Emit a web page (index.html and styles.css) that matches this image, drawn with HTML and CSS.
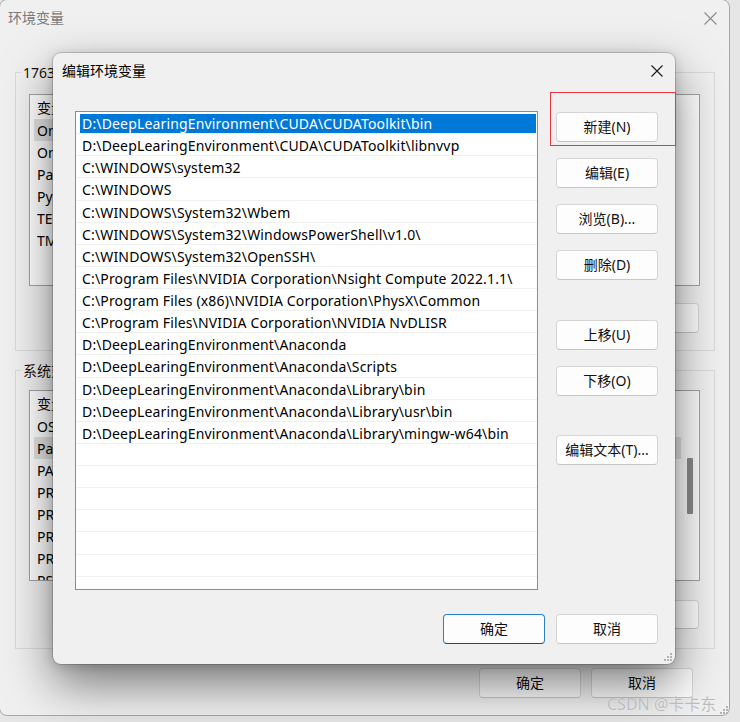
FILE: index.html
```html
<!DOCTYPE html>
<html lang="zh-CN">
<head>
<meta charset="utf-8">
<title>编辑环境变量</title>
<link rel="stylesheet" href="styles.css">
</head>
<body>
<div class="desk">
  <div class="win">
    <div class="win-title">
      <span class="win-title-text">环境变量</span>
      <svg class="win-close" width="13" height="13" viewBox="0 0 13 13"><path d="M0.5 0.5L12.5 12.5M12.5 0.5L0.5 12.5" stroke="#8a8a8a" stroke-width="1.1" fill="none"/></svg>
    </div>

    <fieldset class="grp grp-user">
      <legend>17631 的用户变量(U)</legend>
      <div class="lv lv-user">
        <div class="lv-head"><span class="c1">变量</span><span class="c2">值</span></div>
        <div class="lv-row gray-name"><span class="c1">OneDrive</span><span class="c2">C:\Users\17631\OneDrive</span></div>
        <div class="lv-row"><span class="c1">OneDriveConsumer</span><span class="c2">C:\Users\17631\OneDrive</span></div>
        <div class="lv-row"><span class="c1">Path</span><span class="c2">C:\Users\17631\AppData\Local\Microsoft\WindowsApps;</span></div>
        <div class="lv-row"><span class="c1">PyCharm</span><span class="c2">D:\PyCharm\bin;</span></div>
        <div class="lv-row"><span class="c1">TEMP</span><span class="c2">C:\Users\17631\AppData\Local\Temp</span></div>
        <div class="lv-row"><span class="c1">TMP</span><span class="c2">C:\Users\17631\AppData\Local\Temp</span></div>
      </div>
      <div class="grp-btns">
        <button class="btn">新建(N)...</button>
        <button class="btn">编辑(E)...</button>
        <button class="btn">删除(D)</button>
      </div>
    </fieldset>

    <fieldset class="grp grp-sys">
      <legend>系统变量(S)</legend>
      <div class="lv lv-sys">
        <div class="lv-main">
          <div class="lv-head"><span class="c1">变量</span><span class="c2">值</span></div>
          <div class="lv-row"><span class="c1">OS</span><span class="c2">Windows_NT</span></div>
          <div class="lv-row gray"><span class="c1">Path</span><span class="c2">D:\DeepLearingEnvironment\CUDA\CUDAToolkit\bin;</span></div>
          <div class="lv-row"><span class="c1">PATHEXT</span><span class="c2">.COM;.EXE;.BAT;.CMD;.VBS;.VBE;.JS;</span></div>
          <div class="lv-row"><span class="c1">PROCESSOR_ARCHITECTURE</span><span class="c2">AMD64</span></div>
          <div class="lv-row"><span class="c1">PROCESSOR_IDENTIFIER</span><span class="c2">Intel64 Family 6</span></div>
          <div class="lv-row"><span class="c1">PROCESSOR_LEVEL</span><span class="c2">6</span></div>
          <div class="lv-row"><span class="c1">PROCESSOR_REVISION</span><span class="c2">a502</span></div>
          <div class="lv-row"><span class="c1">PSModulePath</span><span class="c2">%ProgramFiles%\WindowsPowerShell\Modules</span></div>
        </div>
        <div class="lv-scroll"><div class="lv-thumb"></div></div>
      </div>
      <div class="grp-btns grp-btns-sys">
        <button class="btn">新建(W)...</button>
        <button class="btn">编辑(I)...</button>
        <button class="btn">删除(L)</button>
      </div>
    </fieldset>

    <div class="win-foot">
      <button class="btn">确定</button>
      <button class="btn">取消</button>
    </div>
    <svg class="grip grip-win" width="9" height="9" viewBox="0 0 9 9"><g fill="#b4b4b4"><rect x="7" y="1" width="2" height="2"/><rect x="4" y="4" width="2" height="2"/><rect x="7" y="4" width="2" height="2"/><rect x="1" y="7" width="2" height="2"/><rect x="4" y="7" width="2" height="2"/><rect x="7" y="7" width="2" height="2"/></g></svg>
  </div>

  <div class="dlg">
    <div class="dlg-title">
      <span class="dlg-title-text">编辑环境变量</span>
      <svg class="dlg-close" width="12" height="12" viewBox="0 0 12 12"><path d="M0.5 0.5L11.5 11.5M11.5 0.5L0.5 11.5" stroke="#1a1a1a" stroke-width="1.1" fill="none"/></svg>
    </div>
    <div class="dlg-body">
      <div class="plist">
        <div class="prow sel"><span class="pcell">D:\DeepLearingEnvironment\CUDA\CUDAToolkit\bin</span></div>
        <div class="prow"><span class="pcell">D:\DeepLearingEnvironment\CUDA\CUDAToolkit\libnvvp</span></div>
        <div class="prow"><span class="pcell">C:\WINDOWS\system32</span></div>
        <div class="prow"><span class="pcell">C:\WINDOWS</span></div>
        <div class="prow"><span class="pcell">C:\WINDOWS\System32\Wbem</span></div>
        <div class="prow"><span class="pcell">C:\WINDOWS\System32\WindowsPowerShell\v1.0\</span></div>
        <div class="prow"><span class="pcell">C:\WINDOWS\System32\OpenSSH\</span></div>
        <div class="prow"><span class="pcell">C:\Program Files\NVIDIA Corporation\Nsight Compute 2022.1.1\</span></div>
        <div class="prow"><span class="pcell">C:\Program Files (x86)\NVIDIA Corporation\PhysX\Common</span></div>
        <div class="prow"><span class="pcell">C:\Program Files\NVIDIA Corporation\NVIDIA NvDLISR</span></div>
        <div class="prow"><span class="pcell">D:\DeepLearingEnvironment\Anaconda</span></div>
        <div class="prow"><span class="pcell">D:\DeepLearingEnvironment\Anaconda\Scripts</span></div>
        <div class="prow"><span class="pcell">D:\DeepLearingEnvironment\Anaconda\Library\bin</span></div>
        <div class="prow"><span class="pcell">D:\DeepLearingEnvironment\Anaconda\Library\usr\bin</span></div>
        <div class="prow"><span class="pcell">D:\DeepLearingEnvironment\Anaconda\Library\mingw-w64\bin</span></div>
        <div class="prow"><span class="pcell"></span></div>
        <div class="prow"><span class="pcell"></span></div>
        <div class="prow"><span class="pcell"></span></div>
        <div class="prow"><span class="pcell"></span></div>
        <div class="prow"><span class="pcell"></span></div>
        <div class="prow"><span class="pcell"></span></div>
        <div class="prow"><span class="pcell"></span></div>
      </div>
      <div class="side">
        <button class="btn">新建(N)</button>
        <button class="btn">编辑(E)</button>
        <button class="btn">浏览(B)...</button>
        <button class="btn">删除(D)</button>
        <button class="btn gap-big">上移(U)</button>
        <button class="btn">下移(O)</button>
        <button class="btn gap-big2">编辑文本(T)...</button>
      </div>
    </div>
    <div class="dlg-foot">
      <button class="btn btn-default">确定</button>
      <button class="btn">取消</button>
    </div>
    <svg class="grip grip-dlg" width="9" height="9" viewBox="0 0 9 9"><g fill="#b4b4b4"><rect x="7" y="1" width="2" height="2"/><rect x="4" y="4" width="2" height="2"/><rect x="7" y="4" width="2" height="2"/><rect x="1" y="7" width="2" height="2"/><rect x="4" y="7" width="2" height="2"/><rect x="7" y="7" width="2" height="2"/></g></svg>
  </div>

  <div class="mark"></div>
  <div class="wm">CSDN @卡卡东</div>
</div>
</body>
</html>
```

FILE: styles.css
```css
* { box-sizing: border-box; }
html, body { margin: 0; padding: 0; }
body {
  width: 740px;
  height: 722px;
  overflow: hidden;
  background: #e6e6e6;
  font-family: "Noto Sans", "Noto Sans CJK SC", sans-serif;
  font-size: 14px;
  color: #000;
}
.desk { position: relative; width: 740px; height: 722px; overflow: hidden; }

/* ---------- buttons ---------- */
.btn {
  width: 102px;
  height: 30px;
  padding: 0;
  background: #fdfdfd;
  border: 1px solid #d6d6d6;
  border-bottom-color: #c6c6c6;
  border-radius: 4px;
  font-family: "Noto Sans", "Noto Sans CJK SC", sans-serif;
  font-size: 14px;
  color: #111;
  line-height: 28px;
  text-align: center;
  white-space: nowrap;
}
.btn-default {
  border: 1px solid #2a7fc9;
  border-bottom-color: #0b4f8f;
}

/* ---------- background window ---------- */
.win {
  position: absolute;
  left: -1px;
  top: -1px;
  width: 731px;
  height: 717px;
  background: #f0f0f0;
  border: 1px solid #a8a8a8;
  border-radius: 8px;
  display: flex;
  flex-direction: column;
}
.win-title {
  height: 36px;
  flex: none;
  display: flex;
  align-items: center;
  justify-content: space-between;
  padding: 0 12px 0 8px;
}
.win-title-text { color: #7a7a7a; line-height: 20px; }
.win-close { display: block; }

.grp {
  margin: 26.5px 0 0 15px;
  width: 700px;
  min-width: 0;
  border: 1px solid #dadada;
  padding: 12.5px 14px 17px 13px;
  display: flex;
  flex-direction: column;
  gap: 17px;
}
.grp legend {
  margin-left: -8px;
  padding: 0 2px;
  line-height: 19px;
  color: #111;
}
.grp-sys {
  margin-top: 9.5px;
  padding: 10.5px 14px 19px 13px;
  gap: 19px;
}
.grp-btns {
  display: flex;
  justify-content: flex-end;
  gap: 10px;
  padding-right: 1px;
}
.grp-btns-sys .btn { height: 29px; line-height: 27px; }

.lv {
  background: #fff;
  border: 1px solid #a3a3a3;
  overflow: hidden;
}
.lv-user { height: 192px; }
.lv-sys { height: 191px; display: flex; }
.lv-main { flex: 1; min-width: 0; overflow: hidden; }
.lv-scroll {
  width: 18px;
  flex: none;
  background: #fafafa;
  padding: 67px 0 0 6px;
}
.lv-thumb { width: 6px; height: 56px; background: #8a8a8a; border-radius: 1px; }

.lv-head {
  height: 24px;
  display: flex;
  align-items: center;
  padding-left: 7px;
  white-space: nowrap;
}
.lv-head .c1 { border-right: 1px solid #e5e5e5; }
.lv-row {
  height: 22px;
  display: flex;
  align-items: center;
  margin-left: 4px;
  padding-left: 3px;
  white-space: nowrap;
}
.lv-row.gray { background: #e3e3e3; }
.lv-row.gray-name { background: linear-gradient(to right, #e3e3e3 0, #e3e3e3 200px, transparent 200px); }
.c1 { width: 200px; flex: none; overflow: hidden; }
.c2 { padding-left: 8px; overflow: hidden; }

.win-foot {
  margin-top: 19px;
  display: flex;
  justify-content: flex-end;
  gap: 10px;
  padding-right: 36px;
}
.grip { position: absolute; display: block; }
.grip-win { right: 1px; bottom: 1px; }

/* ---------- edit dialog ---------- */
.dlg {
  position: absolute;
  left: 53px;
  top: 53px;
  width: 622px;
  height: 611px;
  background: #f0f0f0;
  border-radius: 8px;
  box-shadow: 0 0 0 1px rgba(0, 0, 0, 0.16), 0 20px 48px rgba(0, 0, 0, 0.5), 0 2px 12px rgba(0, 0, 0, 0.16);
  display: flex;
  flex-direction: column;
}
.dlg-title {
  height: 36px;
  flex: none;
  display: flex;
  align-items: center;
  justify-content: space-between;
  padding: 0 12px 0 9px;
}
.dlg-title-text { line-height: 20px; color: #000; }
.dlg-close { display: block; }

.dlg-body {
  display: flex;
  padding: 22px 17px 0 22px;
}
.plist {
  width: 463px;
  height: 479px;
  background: #fff;
  border: 1px solid #8c8c8c;
  overflow: hidden;
}
.prow {
  height: 22.14px;
  display: flex;
  padding: 2px 1px 0 4px;
  border-bottom: 1px solid #f0f0f0;
}
.pcell {
  flex: 1;
  padding-left: 2px;
  line-height: 19px;
  letter-spacing: 0.16px;
  white-space: nowrap;
  overflow: hidden;
}
.prow.sel .pcell { background: #0078d7; color: #fff; }

.side {
  margin-left: 18px;
  padding-top: 1px;
  display: flex;
  flex-direction: column;
  gap: 16px;
}
.side .gap-big { margin-top: 24px; }
.side .gap-big2 { margin-top: 23px; }

.dlg-foot {
  display: flex;
  justify-content: flex-end;
  gap: 11px;
  padding: 24px 17px 0 0;
}
.grip-dlg { right: 3px; bottom: 3px; }

/* ---------- annotations ---------- */
.mark {
  position: absolute;
  left: 550px;
  top: 92px;
  width: 126px;
  height: 54px;
  border: 1px solid #e8383d;
}
.wm {
  position: absolute;
  left: 607px;
  top: 694px;
  font-family: "Noto Sans", "Noto Sans CJK SC", sans-serif;
  font-size: 16px;
  line-height: 20px;
  color: rgba(175, 175, 175, 0.85);
  text-shadow: 0 0 1px rgba(255, 255, 255, 0.9);
  white-space: nowrap;
}
```
